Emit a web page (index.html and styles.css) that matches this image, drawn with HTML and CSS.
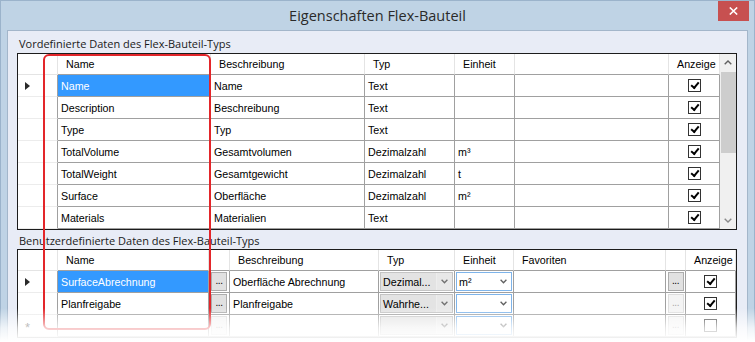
FILE: index.html
```html
<!DOCTYPE html>
<html lang="de">
<head>
<meta charset="utf-8">
<title>Eigenschaften Flex-Bauteil</title>
<link rel="stylesheet" href="styles.css">
</head>
<body>
<div class="window">
  <div class="titlebar">
    <span></span>
    <div class="title">Eigenschaften Flex-Bauteil</div>
    <div class="close"><svg width="9" height="8" viewBox="0 0 9 8"><path d="M0.8 0.5 L8.2 7.5 M8.2 0.5 L0.8 7.5" stroke="#fff" stroke-width="1.6" fill="none"/></svg></div>
  </div>
  <div class="client">
    <div class="label">Vordefinierte Daten des Flex-Bauteil-Typs</div>
    <div class="grid grid-top">
      <div class="table">
        <div class="row head cols-top">
          <div class="hc rh"></div>
          <div class="hc">Name</div>
          <div class="hc">Beschreibung</div>
          <div class="hc">Typ</div>
          <div class="hc">Einheit</div>
          <div class="hc"></div>
          <div class="hc">Anzeige</div>
        </div>
        <div class="row cols-top">
          <div class="c rh"><span class="arrow"></span></div>
          <div class="c sel">Name</div>
          <div class="c">Name</div>
          <div class="c">Text</div>
          <div class="c"></div>
          <div class="c"></div>
          <div class="c chk"><span class="box on"></span></div>
        </div>
        <div class="row cols-top">
          <div class="c rh"></div>
          <div class="c">Description</div>
          <div class="c">Beschreibung</div>
          <div class="c">Text</div>
          <div class="c"></div>
          <div class="c"></div>
          <div class="c chk"><span class="box on"></span></div>
        </div>
        <div class="row cols-top">
          <div class="c rh"></div>
          <div class="c">Type</div>
          <div class="c">Typ</div>
          <div class="c">Text</div>
          <div class="c"></div>
          <div class="c"></div>
          <div class="c chk"><span class="box on"></span></div>
        </div>
        <div class="row cols-top">
          <div class="c rh"></div>
          <div class="c">TotalVolume</div>
          <div class="c">Gesamtvolumen</div>
          <div class="c">Dezimalzahl</div>
          <div class="c">m³</div>
          <div class="c"></div>
          <div class="c chk"><span class="box on"></span></div>
        </div>
        <div class="row cols-top">
          <div class="c rh"></div>
          <div class="c">TotalWeight</div>
          <div class="c">Gesamtgewicht</div>
          <div class="c">Dezimalzahl</div>
          <div class="c">t</div>
          <div class="c"></div>
          <div class="c chk"><span class="box on"></span></div>
        </div>
        <div class="row cols-top">
          <div class="c rh"></div>
          <div class="c">Surface</div>
          <div class="c">Oberfläche</div>
          <div class="c">Dezimalzahl</div>
          <div class="c">m²</div>
          <div class="c"></div>
          <div class="c chk"><span class="box on"></span></div>
        </div>
        <div class="row cols-top">
          <div class="c rh"></div>
          <div class="c">Materials</div>
          <div class="c">Materialien</div>
          <div class="c">Text</div>
          <div class="c"></div>
          <div class="c"></div>
          <div class="c chk"><span class="box on"></span></div>
        </div>
      </div>
      <div class="scrollbar">
        <div class="sb-btn"><svg width="8" height="5" viewBox="0 0 8 5"><path d="M0.7 4.3 L4 1 L7.3 4.3" stroke="#606060" stroke-width="1.4" fill="none"/></svg></div>
        <div class="sb-track"><div class="sb-thumb"></div></div>
        <div class="sb-btn"><svg width="8" height="5" viewBox="0 0 8 5"><path d="M0.7 0.7 L4 4 L7.3 0.7" stroke="#8a8a8a" stroke-width="1.4" fill="none"/></svg></div>
      </div>
    </div>
    <div class="label label-2">Benutzerdefinierte Daten des Flex-Bauteil-Typs</div>
    <div class="grid grid-bottom">
      <div class="table">
        <div class="row head cols-bottom">
          <div class="hc rh"></div>
          <div class="hc">Name</div>
          <div class="hc"></div>
          <div class="hc">Beschreibung</div>
          <div class="hc">Typ</div>
          <div class="hc">Einheit</div>
          <div class="hc">Favoriten</div>
          <div class="hc"></div>
          <div class="hc">Anzeige</div>
        </div>
        <div class="row cols-bottom">
          <div class="c rh"><span class="arrow"></span></div>
          <div class="c sel">SurfaceAbrechnung</div>
          <div class="c btnc"><span class="dots">...</span></div>
          <div class="c">Oberfläche Abrechnung</div>
          <div class="c cmbc"><span class="combo gray"><span class="ct">Dezimal...</span><span class="cb"><svg width="7" height="5" viewBox="0 0 7 5"><path d="M0.6 0.8 L3.5 3.8 L6.4 0.8" stroke="#707070" stroke-width="1.3" fill="none"/></svg></span></span></div>
          <div class="c cmbc"><span class="combo blue"><span class="ct">m²</span><span class="cb"><svg width="7" height="5" viewBox="0 0 7 5"><path d="M0.6 0.8 L3.5 3.8 L6.4 0.8" stroke="#606060" stroke-width="1.3" fill="none"/></svg></span></span></div>
          <div class="c"></div>
          <div class="c btnc"><span class="dots">...</span></div>
          <div class="c chk"><span class="box on"></span></div>
        </div>
        <div class="row cols-bottom">
          <div class="c rh"></div>
          <div class="c">Planfreigabe</div>
          <div class="c btnc"><span class="dots">...</span></div>
          <div class="c">Planfreigabe</div>
          <div class="c cmbc"><span class="combo gray"><span class="ct">Wahrhe...</span><span class="cb"><svg width="7" height="5" viewBox="0 0 7 5"><path d="M0.6 0.8 L3.5 3.8 L6.4 0.8" stroke="#707070" stroke-width="1.3" fill="none"/></svg></span></span></div>
          <div class="c cmbc"><span class="combo blue"><span class="ct"></span><span class="cb"><svg width="7" height="5" viewBox="0 0 7 5"><path d="M0.6 0.8 L3.5 3.8 L6.4 0.8" stroke="#606060" stroke-width="1.3" fill="none"/></svg></span></span></div>
          <div class="c"></div>
          <div class="c btnc"><span class="dots off">...</span></div>
          <div class="c chk"><span class="box on"></span></div>
        </div>
        <div class="row cols-bottom">
          <div class="c rh"><span class="star">*</span></div>
          <div class="c"></div>
          <div class="c btnc"><span class="dots off">...</span></div>
          <div class="c"></div>
          <div class="c cmbc"><span class="combo gray"><span class="ct"></span><span class="cb"><svg width="7" height="5" viewBox="0 0 7 5"><path d="M0.6 0.8 L3.5 3.8 L6.4 0.8" stroke="#707070" stroke-width="1.3" fill="none"/></svg></span></span></div>
          <div class="c cmbc"><span class="combo blue"><span class="ct"></span><span class="cb"><svg width="7" height="5" viewBox="0 0 7 5"><path d="M0.6 0.8 L3.5 3.8 L6.4 0.8" stroke="#606060" stroke-width="1.3" fill="none"/></svg></span></span></div>
          <div class="c"></div>
          <div class="c btnc"><span class="dots off">...</span></div>
          <div class="c chk"><span class="box"></span></div>
        </div>
      </div>
    </div>
  </div>
  <div class="annotation"></div>
  <div class="fade"></div>
</div>
</body>
</html>
```

FILE: styles.css
```css
* { box-sizing: border-box; }
html, body { margin: 0; padding: 0; background: #fff; }
body { width: 755px; height: 342px; overflow: hidden; }

.window {
  position: relative;
  width: 755px;
  height: 342px;
  background: #bfd3e5;
  border: 1px solid #9bb3cb;
  border-bottom: none;
  display: flex;
  flex-direction: column;
}

.titlebar {
  height: 29px;
  display: grid;
  grid-template-columns: 1fr auto 1fr;
  align-items: center;
  flex: none;
}
.title {
  font-family: "Open Sans", "Noto Sans", sans-serif;
  font-size: 14.5px;
  color: #2a2a2a;
  line-height: 20px;
  padding-top: 1px;
}
.close {
  justify-self: end;
  align-self: start;
  width: 31px;
  height: 20px;
  margin-right: 5px;
  background: #c75050;
  display: flex;
  align-items: center;
  justify-content: center;
}

.client {
  flex: 1;
  margin: 0 6px;
  background: #e8ecf6;
  border: 1px solid #a3b6ca;
  border-bottom: none;
  padding: 5px 0 0 9px;
}

.label {
  font-family: "Open Sans", "Noto Sans", sans-serif;
  font-size: 11px;
  line-height: 16px;
  height: 16px;
  color: #1a1a1a;
  padding-left: 2px;
  margin-bottom: 1px;
  white-space: nowrap;
}
.label-2 { margin-top: 3px; margin-bottom: 0; }

.grid {
  width: 720px;
  border: 1px solid #1c1c1c;
  background: #fff;
  display: flex;
  font-family: "Liberation Sans", Arial, sans-serif;
  font-size: 10.7px;
  color: #000;
}
.table { flex: 1; display: flex; flex-direction: column; }

.row { display: grid; height: 22px; }
.row.head { height: 21px; }
.cols-top { grid-template-columns: 40px 153px 154px 90px 60px 154px 51px; }
.cols-bottom { grid-template-columns: 40px 151px 21px 149px 76px 59px 152px 20px 50px; }

.hc {
  display: flex;
  align-items: center;
  padding-left: 8px;
  border-right: 1px solid #e4e4e4;
  border-bottom: 1px solid #a0a0a0;
  white-space: nowrap;
  overflow: hidden;
  background: #fff;
}
.hc.rh { border-bottom-color: #e4e4e4; }

.c {
  display: flex;
  align-items: center;
  padding-left: 3px;
  border-right: 1px solid #a0a0a0;
  border-bottom: 1px solid #a0a0a0;
  white-space: nowrap;
  overflow: hidden;
}
.c.rh {
  border-bottom-color: #ececec;
  padding-left: 7px;
}
.c.sel { background: #3399ff; color: #fff; }
.c.chk { justify-content: center; padding-left: 0; }
.c.btnc { justify-content: center; padding: 0 0 1px 0; }
.c.cmbc { padding: 1px 0 1px 1px; align-items: stretch; }

.arrow {
  width: 0; height: 0;
  border-left: 5px solid #2a2a2a;
  border-top: 4.5px solid transparent;
  border-bottom: 4.5px solid transparent;
}
.star { color: #444; font-size: 13px; line-height: 10px; padding-top: 4px; }

.box {
  width: 13px; height: 13px;
  border: 1px solid #333;
  background: #fff;
  display: block;
  position: relative;
}
.box.on::after {
  content: "";
  position: absolute;
  left: 2px; top: 0px;
  width: 3px; height: 6px;
  border-right: 2.2px solid #000;
  border-bottom: 2.2px solid #000;
  transform: translate(1.5px, 0.5px) rotate(40deg);
}

.dots {
  width: 16px; height: 19px;
  background: #e1e1e1;
  border: 1px solid #adadad;
  font-size: 10px;
  line-height: 16px;
  text-align: center;
  color: #000;
  letter-spacing: -0.5px;
}
.dots.off { background: #f4f4f4; border-color: #dedede; color: #a8a8a8; }

.combo {
  flex: 1;
  display: flex;
  align-items: stretch;
  margin-right: 1px;
}
.combo.gray { background: #e3e3e3; border: 1px solid #c4c4c4; }
.combo.blue { background: #fff; border: 1px solid #7eb4ea; }
.ct { flex: 1; display: flex; align-items: center; padding-left: 2px; overflow: hidden; }
.cb { width: 16px; display: flex; align-items: center; justify-content: center; }
.combo.gray .cb { border-left: 1px solid #ededed; background: #e8e8e8; }

.scrollbar {
  width: 16px;
  background: #f0f0f0;
  display: flex;
  flex-direction: column;
}
.sb-btn { height: 17px; display: flex; align-items: center; justify-content: center; }
.sb-track { flex: 1; padding: 1px 0 0 1px; }
.sb-thumb { height: 81px; background: #cdcdcd; }

.annotation {
  position: absolute;
  left: 42px; top: 53px;
  width: 168px; height: 276px;
  border: 2px solid #e3262a;
  border-radius: 6px;
  pointer-events: none;
}
.fade {
  position: absolute;
  left: -1px; right: -1px;
  top: 307px; height: 36px;
  background: linear-gradient(to bottom, rgba(255,255,255,0) 0%, rgba(255,255,255,0.75) 55%, #fff 92%);
  pointer-events: none;
}
```
